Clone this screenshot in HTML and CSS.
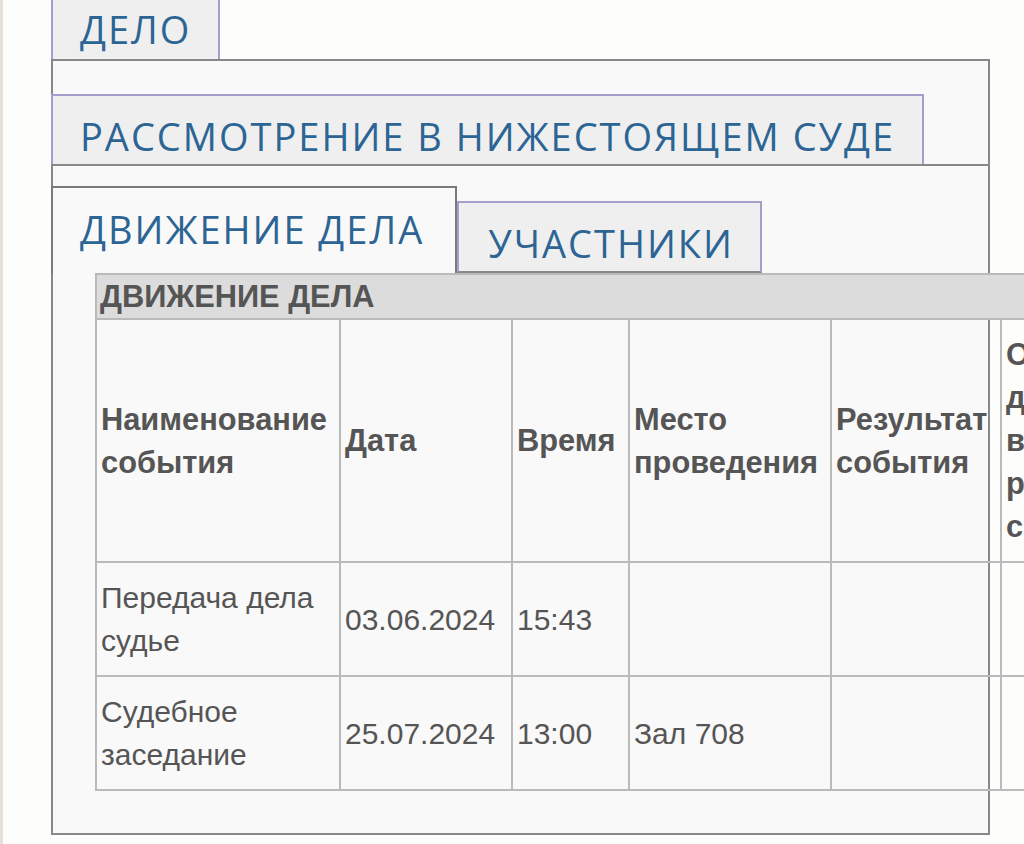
FILE: index.html
```html
<!DOCTYPE html>
<html lang="ru">
<head>
<meta charset="utf-8">
<title>Дело</title>
<link rel="stylesheet" href="styles.css">
</head>
<body>
<div class="top-tabs">
  <div class="tab tab-case">ДЕЛО</div>
</div>
<div class="case-box">
  <div class="tab-row tab-row-first">
    <div class="tab tab-inactive">РАССМОТРЕНИЕ В НИЖЕСТОЯЩЕМ СУДЕ</div>
  </div>
  <div class="panel">
    <div class="tab-row tab-row-second">
      <div class="tab tab-active">ДВИЖЕНИЕ ДЕЛА</div>
      <div class="tab tab-inactive tab-participants">УЧАСТНИКИ</div>
    </div>
    <div class="panel-content">
      <table class="events">
        <caption>ДВИЖЕНИЕ ДЕЛА</caption>
        <colgroup>
          <col class="c1"><col class="c2"><col class="c3"><col class="c4"><col class="c5"><col class="c6"><col class="c7">
        </colgroup>
        <thead>
          <tr>
            <th>Наименование события</th>
            <th>Дата</th>
            <th>Время</th>
            <th>Место проведения</th>
            <th>Результат события</th>
            <th>Основание для выбранного результата события</th>
            <th>Примечание</th>
          </tr>
        </thead>
        <tbody>
          <tr>
            <td>Передача дела судье</td>
            <td>03.06.2024</td>
            <td>15:43</td>
            <td></td>
            <td></td>
            <td></td>
            <td></td>
          </tr>
          <tr>
            <td>Судебное заседание</td>
            <td>25.07.2024</td>
            <td>13:00</td>
            <td>Зал 708</td>
            <td></td>
            <td></td>
            <td></td>
          </tr>
        </tbody>
      </table>
    </div>
  </div>
</div>
</body>
</html>
```
FILE: styles.css
```css
html {
  overflow: hidden;
  background: #fdfdfc;
}
body {
  margin: 0;
  border-left: 3px solid #e6e1d7;
  padding-left: 48px;
  min-height: 844px;
  box-sizing: border-box;
  overflow: hidden;
  background: #fdfdfc;
  font-family: "Liberation Sans", Arial, sans-serif;
}
.tab {
  font-family: "Open Sans", "DejaVu Sans", sans-serif;
  font-size: 38px;
  letter-spacing: 2px;
  color: #2c6494;
  white-space: nowrap;
  box-sizing: border-box;
}
.top-tabs {
  display: flex;
}
.tab-case {
  height: 59px;
  line-height: 59px;
  padding: 0 27px;
  background: #efefef;
  border-left: 2px solid #a39fcc;
  border-right: 2px solid #a39fcc;
}
.case-box {
  width: 939px;
  box-sizing: border-box;
  border: 2px solid #888;
  background: #f9f9f9;
  padding-top: 33px;
  padding-bottom: 42px;
}
.tab-row {
  display: flex;
  align-items: flex-end;
  margin-left: -2px;
}
.tab-row-first {
  border-bottom: 2px solid #888;
}
.tab-inactive {
  background: #efefef;
  border: 2px solid #a39fcc;
  padding: 12px 27px 0;
  line-height: 56px;
  height: 72px;
}
.tab-row-first .tab-inactive {
  border-bottom: none;
  height: 70px;
}
.panel {
  padding-top: 20px;
}
.tab-active {
  background: #f9f9f9;
  border: 2px solid #7a7a7a;
  border-bottom: none;
  height: 87px;
  line-height: 82px;
  padding: 0 31px 3px 27px;
}
.tab-participants {
  border-bottom: 2px solid #888;
  padding-left: 29px;
  padding-right: 26px;
}
.panel-content {
  padding-left: 42px;
}
.events {
  border-collapse: collapse;
  table-layout: fixed;
  width: 1335px;
  color: #555;
  font-size: 30px;
  line-height: 43px;
}
.events caption {
  text-align: left;
  background: #dcdcdc;
  border: 2px solid #bababa;
  border-bottom: none;
  font-weight: bold;
  font-size: 30.8px;
  padding: 0 3px;
  line-height: 43px;
}
.c1 { width: 244px; }
.c2 { width: 172px; }
.c3 { width: 117px; }
.c4 { width: 202px; }
.c5 { width: 170px; }
.c6 { width: 210px; }
.c7 { width: 220px; }
.events th,
.events td {
  border: 2px solid #bababa;
  padding: 13px 6px 13px 4px;
  text-align: left;
  vertical-align: middle;
}
.events th {
  font-weight: bold;
  font-size: 30.8px;
}
```
